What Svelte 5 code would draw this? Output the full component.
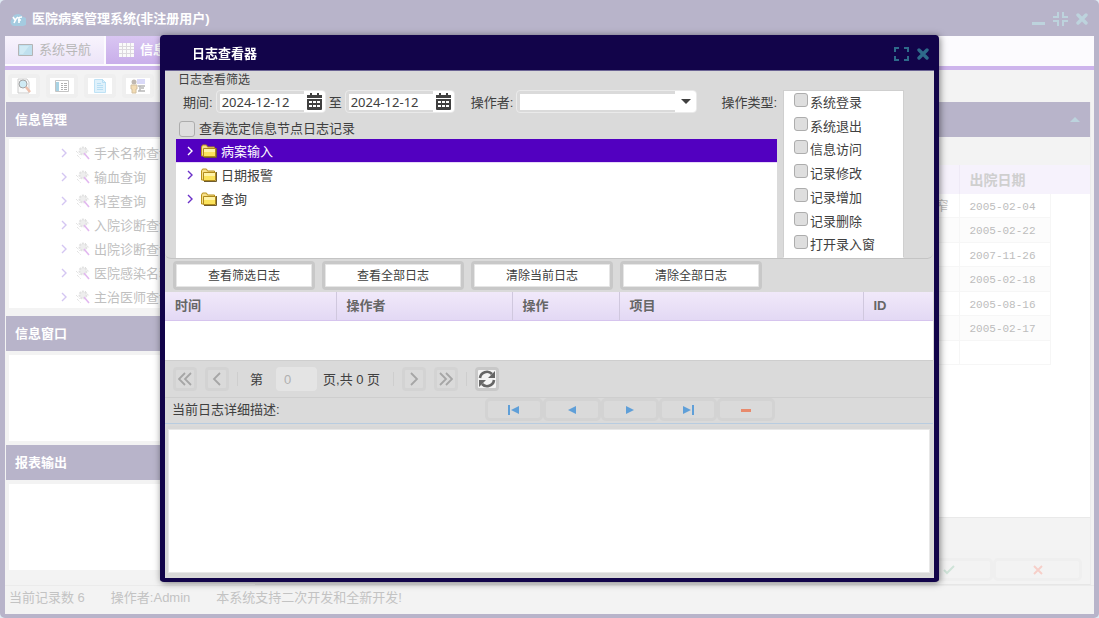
<script lang="ts">
  const queries = ["手术名称查询", "输血查询", "科室查询", "入院诊断查询", "出院诊断查询", "医院感染名称", "主治医师查询"];
  const folders = ["病案输入", "日期报警", "查询"];
  const operations = ["系统登录", "系统退出", "信息访问", "记录修改", "记录增加", "记录删除", "打开录入窗"];
  const records = [
    { note: "窄", date: "2005-02-04" },
    { note: "", date: "2005-02-22" },
    { note: "", date: "2007-11-26" },
    { note: "", date: "2005-02-18" },
    { note: "", date: "2005-08-16" },
    { note: "", date: "2005-02-17" },
    { note: "", date: "" },
  ];
  const actions = ["查看筛选日志", "查看全部日志", "清除当前日志", "清除全部日志"];

  let selected = $state(0);
  let from = $state("2024-12-12");
  let to = $state("2024-12-12");
  let operator = $state("");
  let detail = $state("");
</script>

{#snippet calendar()}
  <svg width="15" height="17" viewBox="0 0 15 17">
    <path fill="#404040" d="M3 0h2v2h5V0h2v2h3v3H0V2h3zM0 6h15v10q0 1-1 1H1q-1 0-1-1z" />
    <path fill="#fff" d="M2 8h3v2H2zM6 8h3v2H6zM10 8h3v2h-3zM2 12h3v2H2zM6 12h3v2H6zM10 12h3v2h-3z" />
  </svg>
{/snippet}

{#snippet close()}
  <svg width="12" height="12" viewBox="0 0 12 12">
    <path d="M2 2l8 8M10 2l-8 8" fill="none" stroke="currentColor" stroke-width="3.4" stroke-linecap="round" />
  </svg>
{/snippet}

{#snippet chevron()}
  <svg class="chevron" width="7" height="10" viewBox="0 0 7 10">
    <path d="M1 1l4 4-4 4" fill="none" stroke="currentColor" stroke-width="1.4" />
  </svg>
{/snippet}

{#snippet arrows(back: boolean, double: boolean)}
  <svg width="14" height="14" viewBox="0 0 14 14" fill="none" stroke="#a6a6a6" stroke-width="1.8">
    {#if double}
      <path d={back ? "M7 1L1 7l6 6M13 1L7 7l6 6" : "M1 1l6 6-6 6M7 1l6 6-6 6"} />
    {:else}
      <path d={back ? "M10 1L4 7l6 6" : "M4 1l6 6-6 6"} />
    {/if}
  </svg>
{/snippet}

<div class="app">
  <header class="titlebar">
    <svg width="16" height="13" viewBox="0 0 16 13">
      <path d="M4 13a4 4 0 0 1-2-7 6 6 0 0 1 11-2 4.500 4.500 0 0 1 0 9z" fill="#a4cbe0" />
      <path d="M3 4l2 3 3-3M6 6l-2 4M9 10V5q0-1 3-1M8 7h3" fill="none" stroke="#fff" stroke-width="1.6" />
    </svg>
    <h1>医院病案管理系统(非注册用户)</h1>
    <div class="tools">
      <button aria-label="最小化">
        <svg width="13" height="12" viewBox="0 0 13 12"><path d="M0 9h13v3H0z" fill="currentColor" /></svg>
      </button>
      <button aria-label="还原">
        <svg width="15" height="14" viewBox="0 0 15 14">
          <path d="M5 0v5H0M10 0v5h5M5 14V9H0M10 14V9h5" fill="none" stroke="currentColor" stroke-width="2" />
        </svg>
      </button>
      <button aria-label="关闭">{@render close()}</button>
    </div>
  </header>

  <nav class="tabs">
    <button class="tab">
      <svg width="15" height="12" viewBox="0 0 15 12">
        <path d="M.5.5h14v11H.5z" fill="#bfe0ee" stroke="#b4b4b4" />
        <path d="M2 2h9L5 10H2z" fill="#d0eaf4" />
      </svg>
      系统导航
    </button>
    <button class="tab current">
      <svg width="15" height="14" viewBox="0 0 15 14">
        <path d="M0 0h15v14H0z" fill="#fafafa" />
        <path d="M3.500 0v14M7.500 0v14M11.500 0v14M0 3.500h15M0 6.500h15M0 10.500h15" stroke="#dcd8de" />
      </svg>
      信息查询
    </button>
  </nav>

  <div class="workspace">
    <aside>
      <div class="toolbar">
        <button aria-label="查找">
          <svg width="16" height="16" viewBox="0 0 16 16">
            <path d="M2 1h9l2 3v11H2z" fill="#fafafa" stroke="#ccc" />
            <circle cx="7" cy="6" r="4" fill="#cfeaf4" stroke="#a4a4a4" />
            <path d="M10 9l4 5" stroke="#ecbfac" stroke-width="2.500" />
          </svg>
        </button>
        <button aria-label="列表">
          <svg width="14" height="12" viewBox="0 0 14 12">
            <path d="M.5.5h13v11H.5z" fill="#fff" stroke="#c4c4c4" />
            <path d="M1 2h3v9H1z" fill="#a9d3e4" />
            <path d="M6 3.500h2M9 3.500h3M6 5.500h2M9 5.500h3M6 7.500h2M9 7.500h3M6 9.500h2M9 9.500h3" stroke="#b0b0b0" />
          </svg>
        </button>
        <button aria-label="新建">
          <svg width="12" height="14" viewBox="0 0 12 14">
            <path d="M.5.5h8l3 3v10H.5z" fill="#dff1fb" stroke="#bfe2f5" />
            <path d="M8.500 0v3.500H12M3 4.500h4M3 6.500h6M3 8.500h6M3 10.500h6" fill="none" stroke="#b8dff4" />
          </svg>
        </button>
        <button aria-label="用户">
          <svg width="16" height="16" viewBox="0 0 16 16">
            <path d="M7 1h8v5H7z" fill="#dadaf8" />
            <circle cx="4" cy="4" r="2.500" fill="#c0b8b0" />
            <path d="M1 7h6v4H6v4H2v-4H1z" fill="#f3dcb4" stroke="#d3c0a0" />
            <path d="M8 8h7M10 8v5M8 13h7M11 10h3" stroke="#b8b8b8" stroke-width="1.500" />
          </svg>
        </button>
      </div>
      <section class="tree-panel">
        <h2>信息管理</h2>
        <ul class="query-tree">
          {#each queries as query}
            <li>
              {@render chevron()}
              <svg width="15" height="14" viewBox="0 0 15 14">
                <circle cx="7" cy="5" r="3.500" fill="#eee" stroke="#e2e2e2" stroke-width="2" stroke-dasharray="2 1" />
                <path d="M0 5l4 4M1 9l4 4M9 1l4 5" stroke="#d8d8d8" stroke-dasharray="1 1" />
                <path d="M8 7l5 6" stroke="#e2b8f0" stroke-width="1.600" />
              </svg>
              <span>{query}</span>
            </li>
          {/each}
        </ul>
      </section>
      <section class="small-panel">
        <h2>信息窗口</h2>
        <div class="blank"></div>
      </section>
      <section class="small-panel">
        <h2>报表输出</h2>
        <div class="blank"></div>
      </section>
    </aside>

    <main>
      <div class="main-header">
        <button aria-label="折叠">
          <svg width="10" height="5" viewBox="0 0 10 5"><path d="M5 0l5 5H0z" fill="#bcd3dd" /></svg>
        </button>
      </div>
      <div class="records">
        <table>
          <colgroup><col /><col class="date-col" /><col class="rest-col" /></colgroup>
          <thead>
            <tr><th></th><th>出院日期</th><th></th></tr>
          </thead>
          <tbody>
            {#each records as record}
              <tr><td class="note">{record.note}</td><td>{record.date}</td><td></td></tr>
            {/each}
          </tbody>
        </table>
      </div>
      <div class="confirm">
        <button aria-label="确定">
          <svg width="12" height="10" viewBox="0 0 12 10"><path d="M1 5l3 3 7-7" fill="none" stroke="#cfe3d8" stroke-width="2" /></svg>
        </button>
        <button aria-label="取消">
          <svg width="10" height="10" viewBox="0 0 10 10"><path d="M1 1l8 8M9 1L1 9" stroke="#f6cfc9" stroke-width="2" /></svg>
        </button>
      </div>
    </main>
  </div>

  <footer class="status">
    <span>当前记录数 6</span>
    <span>操作者:Admin</span>
    <span>本系统支持二次开发和全新开发!</span>
  </footer>
</div>

<div class="dialog" role="dialog" aria-labelledby="dialog-title">
  <header>
    <h2 id="dialog-title">日志查看器</h2>
    <div class="tools">
      <button aria-label="最大化">
        <svg width="15" height="14" viewBox="0 0 15 14">
          <path d="M5 1H1v4M10 1h4v4M5 13H1V9M10 13h4V9" fill="none" stroke="currentColor" stroke-width="2" />
        </svg>
      </button>
      <button aria-label="关闭">{@render close()}</button>
    </div>
  </header>

  <div class="content">
    <fieldset>
      <legend>日志查看筛选</legend>
      <div class="filter">
        <div class="criteria">
          <div class="fields">
            <label for="from">期间:</label>
            <div class="box date">
              <input id="from" bind:value={from} />
              <button aria-label="选择开始日期">{@render calendar()}</button>
            </div>
            <label for="to">至</label>
            <div class="box date">
              <input id="to" bind:value={to} />
              <button aria-label="选择结束日期">{@render calendar()}</button>
            </div>
            <label class="operator" for="operator">操作者:</label>
            <div class="box combo">
              <select id="operator" bind:value={operator}>
                <option value=""></option>
                <option value="Admin">Admin</option>
              </select>
              <span class="arrow">
                <svg width="10" height="5" viewBox="0 0 10 5"><path d="M0 0h10L5 5z" fill="#404040" /></svg>
              </span>
            </div>
            <span class="type" id="type-label">操作类型:</span>
          </div>
          <label class="only-selected"><input type="checkbox" />查看选定信息节点日志记录</label>
          <div class="folders">
            {#each folders as folder, i}
              <button class:selected={selected === i} onclick={() => (selected = i)}>
                {@render chevron()}
                <svg width="16" height="14" viewBox="0 0 16 14">
                  <path d="M.5 12V3l1-2h4l1 2h7v9z" fill="#f7e08a" stroke="#b89018" />
                  <path d="M2.500 12.500v-8h12v8z" fill="#fbe35c" stroke="#b08a1c" />
                  <path d="M3 5h11v3H3z" fill="#fff3a8" />
                  <path d="M15.500 4v9.500H3" fill="none" stroke="#6e5c30" />
                </svg>
                <span>{folder}</span>
              </button>
            {/each}
          </div>
        </div>
        <div class="operations" role="group" aria-labelledby="type-label">
          {#each operations as operation}
            <label><input type="checkbox" /><span>{operation}</span></label>
          {/each}
        </div>
      </div>
    </fieldset>

    <div class="actions">
      {#each actions as action}
        <button>{action}</button>
      {/each}
    </div>

    <table class="log">
      <colgroup><col class="time" /><col class="who" /><col class="op" /><col /><col class="id" /></colgroup>
      <thead>
        <tr><th>时间</th><th>操作者</th><th>操作</th><th>项目</th><th>ID</th></tr>
      </thead>
      <tbody>
        <tr><td colspan="5"></td></tr>
      </tbody>
    </table>

    <div class="pager">
      <button disabled aria-label="首页">{@render arrows(true, true)}</button>
      <button disabled aria-label="上一页">{@render arrows(true, false)}</button>
      <i></i>
      <label for="page">第</label>
      <input id="page" value="0" disabled />
      <span class="total">页,共 0 页</span>
      <i></i>
      <button disabled aria-label="下一页">{@render arrows(false, false)}</button>
      <button disabled aria-label="末页">{@render arrows(false, true)}</button>
      <i></i>
      <button class="refresh" aria-label="刷新">
        <svg width="18" height="18" viewBox="0 0 18 18">
          <path d="M2 8a7 7 0 0 1 12-4M16 10a7 7 0 0 1-12 4" fill="none" stroke="#666" stroke-width="2.600" />
          <path d="M17 1v7h-7zM1 17v-7h7z" fill="#666" />
        </svg>
      </button>
    </div>

    <div class="detail-bar">
      <label for="detail">当前日志详细描述:</label>
      <div class="moves">
        <button aria-label="第一条">
          <svg width="12" height="10" viewBox="0 0 12 10"><path d="M0 0h2v10H0zM11 1v8L3 5z" fill="#5f9fd8" /></svg>
        </button>
        <button aria-label="上一条">
          <svg width="12" height="10" viewBox="0 0 12 10"><path d="M10 1v8L2 5z" fill="#5f9fd8" /></svg>
        </button>
        <button aria-label="下一条">
          <svg width="12" height="10" viewBox="0 0 12 10"><path d="M2 1v8l8-4z" fill="#5f9fd8" /></svg>
        </button>
        <button aria-label="最后一条">
          <svg width="12" height="10" viewBox="0 0 12 10"><path d="M10 0h2v10h-2zM1 1v8l8-4z" fill="#5f9fd8" /></svg>
        </button>
        <button aria-label="删除">
          <svg width="12" height="10" viewBox="0 0 12 10"><path d="M1 4h10v3H1z" fill="#e88a6c" /></svg>
        </button>
      </div>
    </div>
    <textarea id="detail" bind:value={detail}></textarea>
  </div>
</div>

<style>
  :global(body) {
    background: #dfeaf2;
    font: 13px/18px "Liberation Sans", "Noto Sans CJK SC", sans-serif;
    color: #404040;
  }
  h1,
  h2 {
    margin: 0;
    font-size: 13px;
    font-weight: 700;
    color: #fff;
  }
  button,
  input,
  select,
  textarea {
    margin: 0;
    padding: 0;
    border: 0;
    font: inherit;
    color: inherit;
    box-sizing: border-box;
    outline: none;
  }
  button {
    background: none;
    display: flex;
    align-items: center;
    justify-content: center;
  }
  svg {
    display: block;
    flex: none;
  }

  .app {
    height: 100vh;
    box-sizing: border-box;
    display: flex;
    flex-direction: column;
    border: solid #b8b4ca;
    border-width: 0 5px 4px;
    border-radius: 5px;
    background: #f3f3f3;
    overflow: hidden;
  }
  .titlebar {
    height: 36px;
    flex: none;
    display: flex;
    align-items: center;
    gap: 6px;
    padding: 2px 6px 0 5px;
    box-sizing: border-box;
    background: #b8b4ca;
  }
  .tools {
    display: flex;
    align-items: center;
    gap: 8px;
    margin-left: auto;
    color: #bdd3dd;
  }
  .tabs {
    height: 34px;
    flex: none;
    box-sizing: border-box;
    display: flex;
    gap: 2px;
    padding-bottom: 2px;
    background: #fcfbfe;
    border-bottom: 4px solid #cdb4ec;
  }
  .tab {
    width: 99px;
    gap: 6px;
    color: #b8b8b8;
    background: linear-gradient(#f8f4fd, #ece4f8);
  }
  .tab.current {
    color: #fff;
    font-weight: 700;
    background: linear-gradient(#d9c6f2, #c9aeea);
  }
  .workspace {
    flex: 1;
    min-height: 0;
    display: flex;
  }
  aside {
    width: 250px;
    flex: none;
    display: flex;
    flex-direction: column;
    gap: 4px;
    padding: 0 1px 15px;
    box-sizing: border-box;
  }
  .toolbar {
    height: 28px;
    display: flex;
    gap: 6px;
    padding-left: 2px;
    padding-top: 4px;
    box-sizing: border-box;
  }
  .toolbar button {
    width: 32px;
    height: 24px;
    flex: none;
    background: #fff;
    border: 4px solid #efefef;
    border-radius: 4px;
  }
  aside h2 {
    height: 35px;
    line-height: 35px;
    padding-left: 9px;
    background: #b8b4ca;
  }
  section {
    display: flex;
    flex-direction: column;
  }
  .tree-panel {
    height: 210px;
    flex: none;
  }
  .small-panel {
    flex: 1;
  }
  .query-tree {
    flex: 1;
    margin: 2px 3px 4px;
    padding: 2px 0 0 52px;
    background: #fff;
    list-style: none;
    color: #c0c0c0;
    overflow: hidden;
  }
  .query-tree li {
    height: 24px;
    display: flex;
    align-items: center;
    white-space: nowrap;
  }
  .query-tree li span {
    margin-left: 3px;
    padding-top: 2px;
  }
  .chevron {
    margin-right: 8px;
  }
  .query-tree .chevron {
    color: #d4c6f2;
  }
  .blank {
    flex: 1;
    margin: 4px 3px 0;
    background: #fff;
  }

  main {
    flex: 1;
    display: flex;
    flex-direction: column;
    margin: 32px 3px 0 0;
    border-right: 1px solid #ececec;
    border-bottom: 1px solid #e6e6e6;
  }
  .main-header {
    height: 35px;
    display: flex;
    align-items: center;
    justify-content: flex-end;
    padding-right: 10px;
    background: #b8b4ca;
  }
  .records {
    flex: 1;
    margin-top: 28px;
    background: #fff;
    border-bottom: 1px solid #e9e9e9;
  }
  .records table {
    width: 100%;
    table-layout: fixed;
    border-collapse: collapse;
    color: #bdbdbd;
  }
  .date-col {
    width: 91px;
  }
  .rest-col {
    width: 40px;
  }
  .records th {
    height: 29px;
    padding: 0 0 0 10px;
    font-size: 14px;
    text-align: left;
    white-space: nowrap;
    background: #f6f2fc;
    color: #cfcfcf;
  }
  .records th:nth-child(2) {
    border-left: 1px solid #efeaf6;
  }
  .records td {
    height: 22px;
    padding: 2px 0 0 10px;
    border: solid #f6f6f6;
    border-width: 0 1px 1px 0;
    font: 11px/18px "Liberation Mono", "Noto Sans CJK SC", monospace;
  }
  .records tr:nth-child(even) td {
    background: #fcfcfc;
  }
  .records tr:nth-child(odd) td {
    height: 21px;
  }
  .records .note {
    padding-right: 10px;
    text-align: right;
    font-size: 13px;
  }
  .records tr td:last-child {
    border: 0;
    background: #fff;
  }
  .confirm {
    height: 66px;
    display: flex;
    align-items: flex-end;
    justify-content: flex-end;
    padding: 0 8px 3px 0;
    box-sizing: border-box;
  }
  .confirm button {
    width: 89px;
    height: 23px;
    border: 3px solid #efefef;
    border-radius: 5px;
  }
  .status {
    height: 29px;
    flex: none;
    display: flex;
    align-items: center;
    gap: 26px;
    padding: 0 4px 4px;
    box-sizing: border-box;
    border-top: 1px solid #ebebeb;
    color: #c3c3c3;
  }

  .dialog {
    position: fixed;
    inset: 35px 160px 36px;
    display: flex;
    flex-direction: column;
    box-sizing: border-box;
    border: solid #12044a;
    border-width: 0 5px 4px;
    border-radius: 4px;
    background: #12044a;
    box-shadow: 1px 1px 7px rgba(0, 0, 0, 0.5);
  }
  .dialog header {
    height: 35px;
    flex: none;
    display: flex;
    align-items: center;
    padding: 3px 5px 0 27px;
    box-sizing: border-box;
  }
  .dialog .tools {
    color: #2e6a8a;
  }
  .content {
    flex: 1;
    min-height: 0;
    display: flex;
    flex-direction: column;
    padding-right: 1px;
    border-top: 1px solid #6b6494;
    background: #dadada;
  }
  fieldset {
    min-width: 0;
    margin: 0;
    padding: 0 29px 0 11px;
    border: solid #c4c4c4;
    border-width: 0 0 1px;
    border-radius: 0 0 6px 6px;
  }
  legend {
    height: 18px;
    padding: 0 2px;
    font-size: 12px;
  }
  .filter {
    display: flex;
    gap: 6px;
  }
  .criteria {
    flex: 1;
    display: flex;
    flex-direction: column;
  }
  .fields {
    height: 25px;
    display: flex;
    align-items: center;
    padding-left: 7px;
    gap: 3px;
    white-space: nowrap;
  }
  .fields > label,
  .type {
    padding-top: 3px;
  }
  .fields .operator {
    margin-left: 13px;
  }
  .type {
    margin-left: auto;
  }
  .box {
    height: 23px;
    display: flex;
    align-items: center;
    box-sizing: border-box;
    border: 1px solid #eaeaea;
    border-radius: 4px;
    padding-left: 3px;
    overflow: hidden;
  }
  .date {
    width: 110px;
  }
  .box input {
    flex: 1;
    min-width: 0;
    height: 16px;
    padding-left: 2px;
    font: 13px/16px "Noto Sans", sans-serif;
    background: #fff;
  }
  .box button,
  .arrow {
    width: 21px;
    height: 100%;
    flex: none;
    display: flex;
    align-items: center;
    justify-content: center;
    background: #fff;
  }
  .combo {
    position: relative;
    width: 181px;
  }
  .combo select {
    flex: 1;
    height: 16px;
    margin-right: 21px;
    appearance: none;
    background: #fff;
  }
  .arrow {
    position: absolute;
    right: 0;
    pointer-events: none;
  }
  input[type="checkbox"] {
    appearance: none;
    width: 14px;
    height: 14px;
    flex: none;
    border: 1px solid #adadad;
    border-radius: 3px;
    background: #dedede;
  }
  input[type="checkbox"]:checked {
    background: #5200c0;
  }
  .only-selected {
    height: 25px;
    display: flex;
    align-items: center;
    gap: 4px;
    padding: 4px 0 0 3px;
    box-sizing: border-box;
  }
  .only-selected input[type="checkbox"] {
    width: 16px;
    height: 16px;
  }
  .folders {
    flex: 1;
    background: #fff;
  }
  .folders button {
    width: 100%;
    height: 24px;
    justify-content: flex-start;
    padding-left: 11px;
    color: #404040;
  }
  .folders span {
    margin-left: 4px;
    padding-top: 2px;
  }
  .folders .chevron {
    margin-right: 7px;
    color: #6a30c8;
  }
  .folders .selected,
  .folders .selected .chevron {
    color: #fff;
  }
  .folders .selected {
    background: #5200c0;
    border-bottom: 1px solid #e6d8f8;
  }
  .operations {
    width: 121px;
    height: 168px;
    display: grid;
    grid-auto-rows: 1fr;
    margin-top: 1px;
    padding-left: 10px;
    box-sizing: border-box;
    border: 1px solid #cfcfcf;
    border-bottom-color: #fff;
    background: #fff;
  }
  .operations label {
    display: flex;
    gap: 2px;
    padding-top: 2px;
  }
  .operations label span {
    padding-top: 1px;
  }

  .actions {
    display: flex;
    gap: 7px;
    padding: 2px 8px;
  }
  .actions button {
    width: 142px;
    height: 29px;
    padding-top: 1px;
    border: 3px solid #c8c8c8;
    border-radius: 4px;
    background: #fff;
    box-shadow: inset 0 0 0 1px #e6e6e6;
    font-size: 12px;
  }
  .log {
    width: 100%;
    table-layout: fixed;
    border-collapse: collapse;
    background: #fff;
  }
  .time {
    width: 171px;
  }
  .who {
    width: 176px;
  }
  .op {
    width: 107px;
  }
  .id {
    width: 70px;
  }
  .log thead tr {
    background: linear-gradient(#f1e9fa, #e2d8f4);
  }
  .log th {
    height: 28px;
    padding: 0 10px;
    text-align: left;
    color: #666;
    border: solid #d0c8de;
    border-width: 0 1px 0 0;
    border-bottom: 1px solid #d6c4ee;
  }
  .log th:last-child {
    border-right: 0;
  }
  .log td {
    height: 39px;
    padding: 0;
    border-bottom: 1px solid #cecece;
  }
  .pager {
    height: 37px;
    flex: none;
    display: flex;
    align-items: center;
    gap: 8px;
    padding-left: 8px;
    box-sizing: border-box;
    border-bottom: 1px solid #cecece;
  }
  .pager button {
    width: 24px;
    height: 24px;
    flex: none;
    border: 3px solid #d3d3d3;
    border-radius: 4px;
  }
  .pager i {
    width: 1px;
    height: 14px;
    background: #cecece;
  }
  .pager label {
    margin: 0 5px 0 4px;
    padding-top: 2px;
  }
  .pager input {
    width: 41px;
    height: 24px;
    padding-left: 5px;
    border: 3px solid #e4e4e4;
    border-radius: 4px;
    background: #e4e4e4;
    color: #b0b0b0;
  }
  .pager .total {
    margin: 0 5px 0 -2px;
    padding-top: 2px;
  }
  .pager .refresh {
    border-color: #c8c8c8;
    background: #f4f4f4;
  }
  .detail-bar {
    height: 26px;
    flex: none;
    display: flex;
    align-items: flex-start;
    padding-left: 7px;
    box-sizing: border-box;
    border-bottom: 1px solid #b8cce0;
  }
  .detail-bar label {
    width: 313px;
    padding-top: 3px;
  }
  .moves {
    display: flex;
  }
  .moves button {
    width: 58px;
    height: 23px;
    border: 3px solid #d3d3d3;
    border-radius: 5px;
  }
  textarea {
    flex: 1;
    min-height: 0;
    margin: 2px 0;
    padding: 4px;
    resize: none;
    background: #fff;
    border: 3px solid #d8d8d8;
    border-radius: 3px;
    box-shadow: inset 0 0 0 1px #e8e8e8;
  }
</style>
